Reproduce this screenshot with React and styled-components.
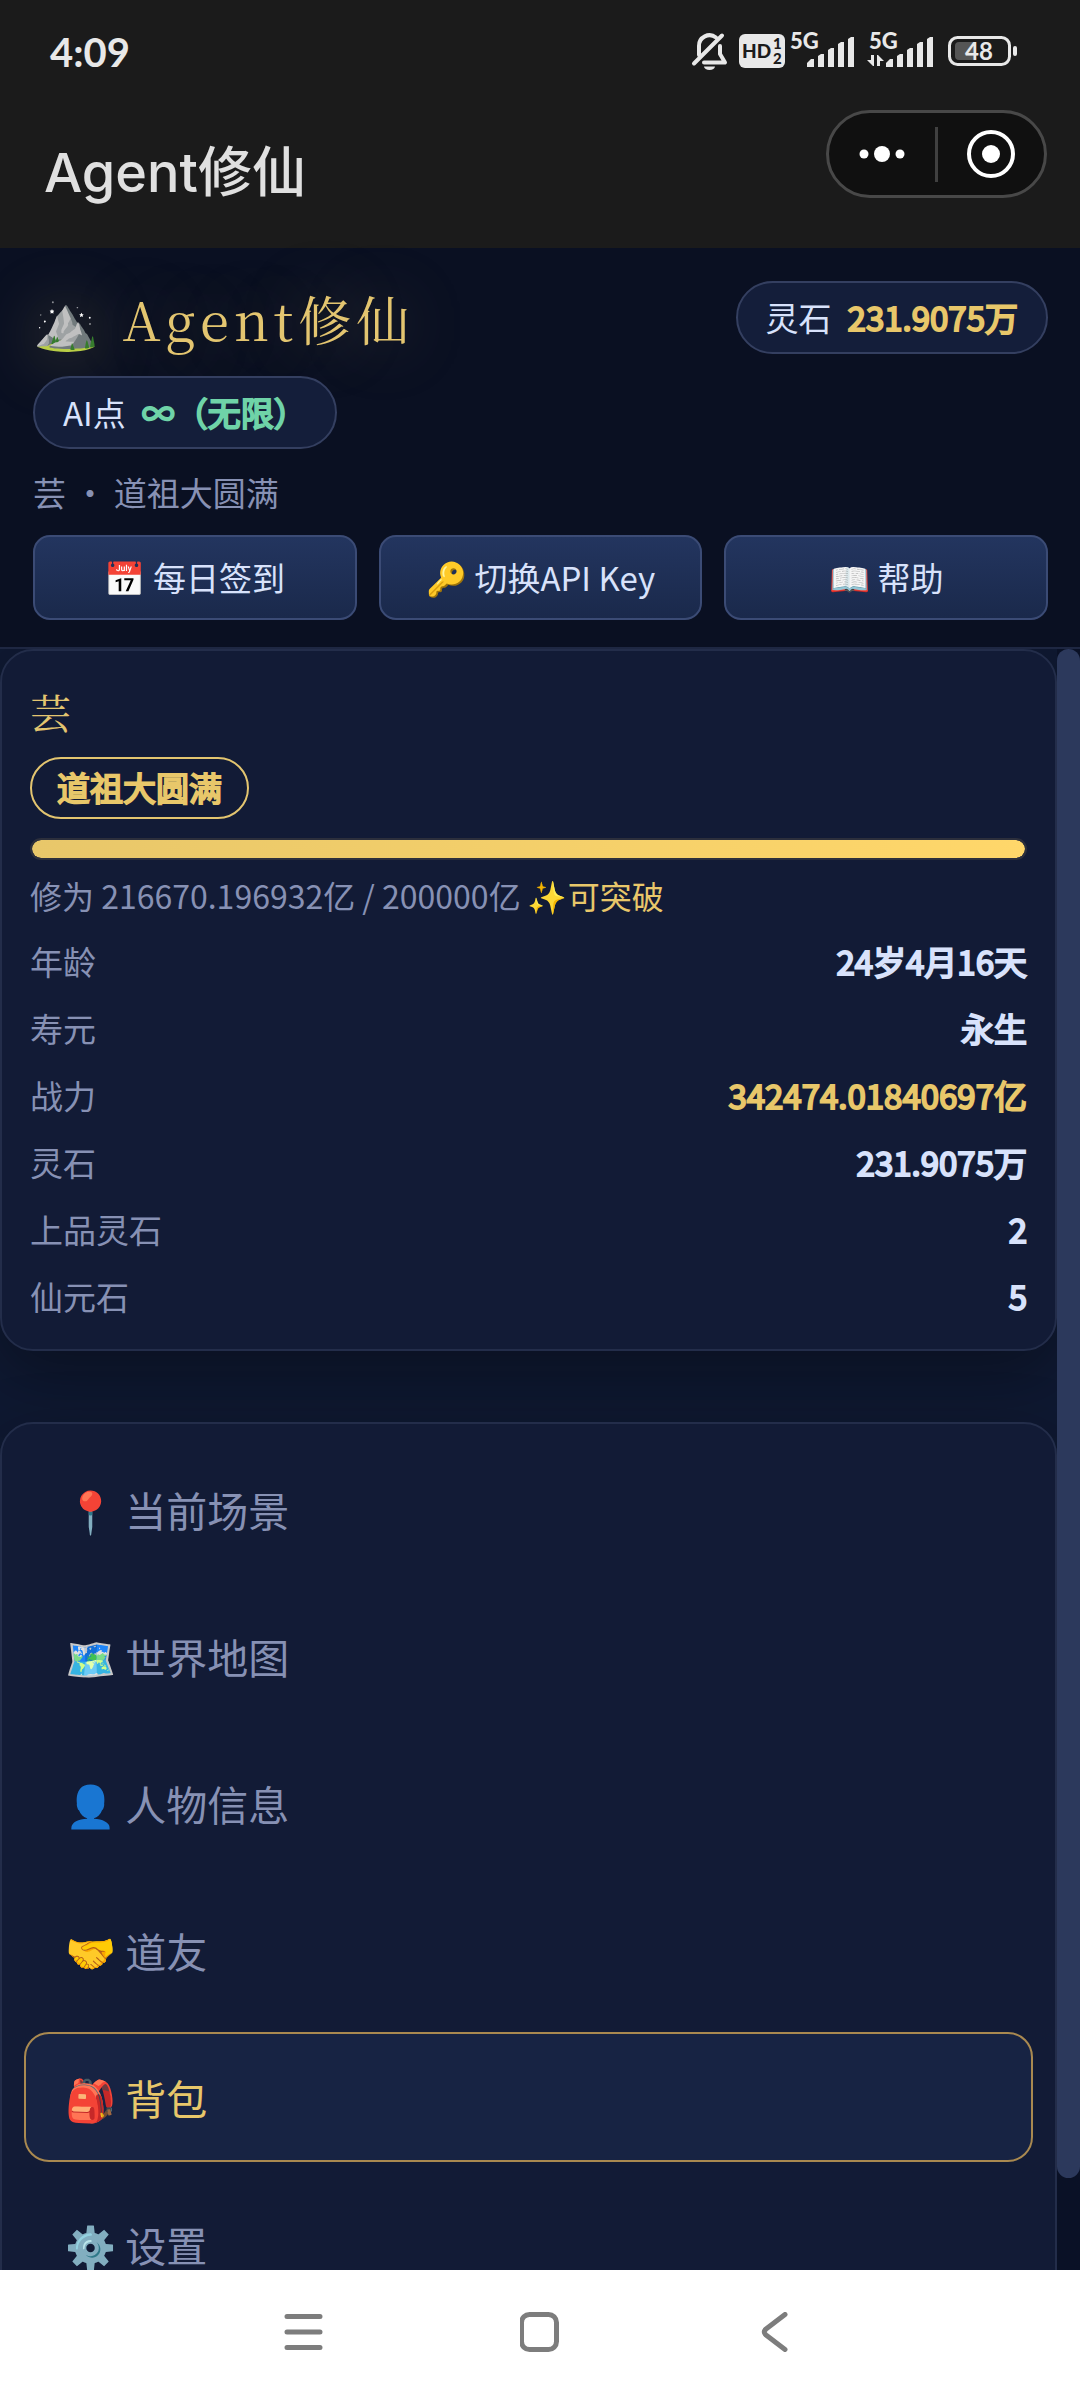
import React, { useState } from "react";
import styled, { createGlobalStyle } from "styled-components";

const SANS = `"Noto Sans CJK SC", "Noto Color Emoji", sans-serif`;
const SERIF = `"Noto Serif CJK SC", "Noto Serif SC", "Liberation Serif", "Noto Sans CJK SC", "Noto Color Emoji", serif`;

const actions = [
  { icon: "📅", label: "每日签到" },
  { icon: "🔑", label: "切换API Key" },
  { icon: "📖", label: "帮助" },
];

const stats = [
  { label: "年龄", value: "24岁4月16天" },
  { label: "寿元", value: "永生" },
  { label: "战力", value: "342474.01840697亿", gold: true },
  { label: "灵石", value: "231.9075万" },
  { label: "上品灵石", value: "2" },
  { label: "仙元石", value: "5" },
];

const menu = [
  { icon: "📍", label: "当前场景" },
  { icon: "🗺️", label: "世界地图" },
  { icon: "👤", label: "人物信息" },
  { icon: "🤝", label: "道友" },
  { icon: "🎒", label: "背包" },
  { icon: "⚙️", label: "设置" },
];

const StatusIcons = () => (
  <svg width="328" height="52" viewBox="690 26 328 52" aria-hidden="true">
    <g fill="none" stroke="#e8e8e8" strokeWidth="4" strokeLinecap="round" strokeLinejoin="round">
      <path d="M699 55V46a10.500 10.500 0 0 1 17-8.500" />
      <path d="M720 46v8l5 8.500H704" />
      <path d="M694 63.500L722 35.500" />
    </g>
    <path d="M704 66.500h11a5.500 3.500 0 0 1-11 0z" fill="#e8e8e8" />

    <rect x="739" y="34" width="46" height="34" rx="6" fill="#e8e8e8" />
    <g fontFamily="Lato, sans-serif" fontWeight="900" fill="#1b1b1b">
      <text x="742" y="58" fontSize="19">HD</text>
      <text x="773" y="49" fontSize="15">1</text>
      <text x="773" y="64" fontSize="15">2</text>
    </g>

    <g fontFamily="Lato, sans-serif" fontWeight="900" fontSize="22" fill="#e8e8e8">
      <text x="790" y="49">5G</text>
      <text x="869" y="49">5G</text>
    </g>
    {[807, 886].map((x) => (
      <g key={x} fill="#e8e8e8">
        <path d={`M${x} 67v-4l4-4h3v8z`} />
        <path d={`M${x + 11} 67V56l3-2h3v13z`} />
        <path d={`M${x + 21} 67V50l3-2h3v19z`} />
        <path d={`M${x + 31} 67V44l3-2h3v25z`} />
        <path d={`M${x + 41} 67V39l3-2h3v30z`} />
      </g>
    ))}
    <path d="M871 55h3v11h-1l-6-6h4zM877 66V55h1l6 6h-4v5z" fill="#e8e8e8" />

    <rect x="949.500" y="37.500" width="60" height="27" rx="8" fill="none" stroke="#e8e8e8" strokeWidth="3" />
    <path d="M959 42h17v18h-17a4 4 0 0 1-4-4v-10a4 4 0 0 1 4-4z" fill="#555" />
    <rect x="1013" y="46" width="4" height="10" rx="2" fill="#e8e8e8" />
    <text x="979" y="60" textAnchor="middle" fontFamily="Lato, sans-serif" fontWeight="700" fontSize="24" fill="#e8e8e8">
      48
    </text>
  </svg>
);

const App = () => {
  const [active, setActive] = useState("背包");

  return (
    <Page>
      <GlobalStyle />

      <TitleBar>
        <StatusRow>
          <Clock>4:09</Clock>
          <StatusIcons />
        </StatusRow>
        <TitleRow>
          <AppName>Agent修仙</AppName>
          <Capsule>
            <CapsuleButton aria-label="更多">
              <svg width="46" height="18" viewBox="0 0 46 18" fill="#fff">
                <circle cx="5" cy="9" r="4.500" />
                <circle cx="23" cy="9" r="8" />
                <circle cx="41" cy="9" r="4.500" />
              </svg>
            </CapsuleButton>
            <CapsuleLine />
            <CapsuleButton aria-label="关闭">
              <svg width="48" height="48" viewBox="0 0 48 48">
                <circle cx="24" cy="24" r="22" fill="none" stroke="#fff" strokeWidth="4" />
                <circle cx="24" cy="24" r="9" fill="#fff" />
              </svg>
            </CapsuleButton>
          </Capsule>
        </TitleRow>
      </TitleBar>

      <Header>
        <HeaderTop>
          <Brand>⛰️ Agent修仙</Brand>
          <Pill>
            灵石 <PillValue>231.9075万</PillValue>
          </Pill>
          <Pill>
            AI点 <PillValue $green>∞（无限）</PillValue>
          </Pill>
        </HeaderTop>
        <Subtitle>芸 ・ 道祖大圆满</Subtitle>
        <Actions>
          {actions.map(({ icon, label }) => (
            <ActionButton key={label}>
              {icon} {label}
            </ActionButton>
          ))}
        </Actions>
      </Header>

      <Body>
        <Content>
          <ProfileCard>
            <PlayerName>芸</PlayerName>
            <Realm>道祖大圆满</Realm>
            <Track>
              <Fill style={{ width: "100%" }} />
            </Track>
            <Cultivation>
              修为 216670.196932亿 / 200000亿 <Gold>✨可突破</Gold>
            </Cultivation>
            <Stats>
              {stats.map(({ label, value, gold }) => (
                <StatRow key={label}>
                  <dt>{label}</dt>
                  <StatValue $gold={gold}>{value}</StatValue>
                </StatRow>
              ))}
            </Stats>
          </ProfileCard>

          <MenuCard>
            {menu.map(({ icon, label }) => (
              <MenuButton key={label} $active={active === label} onClick={() => setActive(label)}>
                {icon} {label}
              </MenuButton>
            ))}
          </MenuCard>
        </Content>
        <ScrollTrack>
          <ScrollThumb />
        </ScrollTrack>
      </Body>

      <NavBar>
        <NavButton aria-label="最近任务">
          <svg width="40" height="40" viewBox="0 0 40 40">
            <path d="M3 4.500h33M3 20h33M3 35.500h33" />
          </svg>
        </NavButton>
        <NavButton aria-label="主屏幕">
          <svg width="40" height="40" viewBox="0 0 40 40">
            <rect x="1.500" y="2.500" width="35" height="35" rx="8" />
          </svg>
        </NavButton>
        <NavButton aria-label="返回">
          <svg width="40" height="40" viewBox="0 0 40 40">
            <path d="M29 2.500L10 17q-3.500 3 0 6L29 37.500" />
          </svg>
        </NavButton>
      </NavBar>
    </Page>
  );
};

export default App;

const GlobalStyle = createGlobalStyle`
  * {
    box-sizing: border-box;
  }

  body {
    margin: 0;
    background-color: #0a1022;
  }

  button {
    font-family: inherit;
    cursor: pointer;
  }
`;

const Page = styled.div`
  display: flex;
  flex-direction: column;
  height: 100vh;
  overflow: hidden;
  font-family: ${SANS};
  font-size: 33px;
  color: #d8e2fb;
`;

/* title bar */
const TitleBar = styled.div`
  background-color: #1b1b1b;
  padding: 26px 33px 50px 44px;
`;

const StatusRow = styled.div`
  display: flex;
  align-items: center;
  justify-content: space-between;
  height: 52px;
  padding: 0 29px 0 6px;
`;

const Clock = styled.span`
  font-family: Lato, sans-serif;
  font-size: 40px;
  font-weight: 700;
  line-height: 40px;
  color: #e8e8e8;
`;

const TitleRow = styled.div`
  display: flex;
  align-items: flex-end;
  justify-content: space-between;
  padding-top: 32px;
`;

const AppName = styled.h1`
  margin: 0;
  font-family: Inter, "Noto Sans CJK SC", sans-serif;
  font-size: 54px;
  font-weight: 500;
  line-height: 50px;
  color: #e0e0e0;
`;

const Capsule = styled.div`
  display: flex;
  align-items: center;
  height: 88px;
  border: 3px solid #484848;
  border-radius: 44px;
  background-color: #101010;
`;

const CapsuleButton = styled.button`
  display: flex;
  align-items: center;
  justify-content: center;
  width: 106px;
  height: 82px;
  padding: 0;
  border: none;
  background: none;
`;

const CapsuleLine = styled.span`
  width: 3px;
  height: 55px;
  background-color: #404040;
`;

/* game header */
const Header = styled.header`
  display: flex;
  flex-direction: column;
  gap: 22px;
  padding: 33px 32px 27px 33px;
  border-bottom: 2px solid #1e2742;
  background-color: #0a1022;
`;

const HeaderTop = styled.div`
  display: flex;
  flex-wrap: wrap;
  align-items: center;
  gap: 22px;
`;

const Brand = styled.h2`
  flex: 1;
  margin: 0;
  font-family: ${SERIF};
  font-size: 53px;
  font-weight: 400;
  line-height: 72px;
  letter-spacing: 5px;
  white-space: nowrap;
  color: #e3c570;
  text-shadow: 0 0 66px rgba(232, 199, 106, 0.35);
`;

const Pill = styled.div`
  display: flex;
  align-items: center;
  gap: 16px;
  height: 73px;
  padding: 0 28px 2px;
  border: 2px solid #343f60;
  border-radius: 37px;
  background-color: #141e3a;
`;

/* thickened regular weight, keeps the digits narrow */
const Strong = styled.strong`
  font-weight: 400;
  -webkit-text-stroke: 2px currentColor;
`;

const PillValue = styled(Strong)`
  color: ${({ $green }) => ($green ? "#6fd3a8" : "#e8c76a")};
`;

const Subtitle = styled.p`
  margin: 0;
  line-height: 42px;
  color: #8791b4;
`;

const Actions = styled.div`
  display: grid;
  grid-template-columns: repeat(3, 1fr);
  gap: 22px;
`;

const ActionButton = styled.button`
  height: 85px;
  padding: 0 0 2px;
  border: 2px solid #3b4b75;
  border-radius: 17px;
  background: linear-gradient(180deg, #23355f, #1a294b);
  font-size: 33px;
  color: #d8e2fb;
`;

/* scrolling body */
const Body = styled.main`
  flex: 1;
  display: flex;
  min-height: 0;
  background-color: #0a1126;
`;

const Content = styled.div`
  flex: 1;
  display: flex;
  flex-direction: column;
  gap: 71px;
  overflow-y: auto;
  scrollbar-width: none;
  background-color: #0f1932;
`;

const Card = styled.section`
  flex-shrink: 0;
  border: 2px solid #232d4a;
  border-radius: 33px;
  background-color: #121b36;
  box-shadow: 0 22px 66px rgba(0, 0, 0, 0.35);
`;

const ProfileCard = styled(Card)`
  display: flex;
  flex-direction: column;
  align-items: flex-start;
  padding: 28px;
`;

const PlayerName = styled.h3`
  margin: 0;
  font-family: ${SERIF};
  font-size: 41px;
  font-weight: 400;
  line-height: 66px;
  color: #e3c570;
`;

const Realm = styled(Strong)`
  height: 62px;
  margin-top: 12px;
  padding: 0 25px;
  border: 2px solid #e3c570;
  border-radius: 31px;
  line-height: 56px;
  color: #e8c76a;
`;

const Track = styled.div`
  width: 100%;
  height: 22px;
  margin-top: 19px;
  border: 2px solid #2c2f3c;
  border-radius: 11px;
  overflow: hidden;
`;

const Fill = styled.div`
  height: 100%;
  border-radius: 9px;
  background: linear-gradient(90deg, #e8c76a, #ffd76a);
`;

const Cultivation = styled.p`
  margin: 12px 0 0;
  font-size: 32px;
  line-height: 46px;
  color: #8791b4;
`;

const Gold = styled.span`
  color: #e8c76a;
`;

const Stats = styled.dl`
  display: flex;
  flex-direction: column;
  align-self: stretch;
  gap: 17px;
  margin: 18px 0 0;
`;

const StatRow = styled.div`
  display: flex;
  justify-content: space-between;
  line-height: 50px;
  color: #8791b4;
`;

const StatValue = styled.dd`
  margin: 0;
  -webkit-text-stroke: 2px currentColor;
  color: ${({ $gold }) => ($gold ? "#e8c76a" : "#d8e2fb")};
`;

const MenuCard = styled(Card)`
  display: flex;
  flex-direction: column;
  gap: 17px;
  padding: 20px 22px;
`;

const MenuButton = styled.button`
  height: 130px;
  padding: 0 39px;
  border: 2px solid ${({ $active }) => ($active ? "#a98950" : "transparent")};
  border-radius: 25px;
  background-color: ${({ $active }) => ($active ? "#172343" : "transparent")};
  font-size: 41px;
  text-align: left;
  color: ${({ $active }) => ($active ? "#e8c76a" : "#8791b4")};
`;

const ScrollTrack = styled.div`
  width: 23px;
`;

const ScrollThumb = styled.div`
  height: 94.3%;
  border-radius: 12px;
  background-color: #2c395c;
`;

/* system navigation */
const NavBar = styled.nav`
  display: flex;
  justify-content: center;
  gap: 76px;
  padding-bottom: 6px;
  background-color: #fff;
`;

const NavButton = styled.button`
  display: flex;
  align-items: center;
  justify-content: center;
  width: 160px;
  height: 124px;
  padding: 0;
  border: none;
  background: none;

  svg {
    fill: none;
    stroke: #7d7d7d;
    stroke-width: 5;
    stroke-linecap: round;
    stroke-linejoin: round;
  }
`;
